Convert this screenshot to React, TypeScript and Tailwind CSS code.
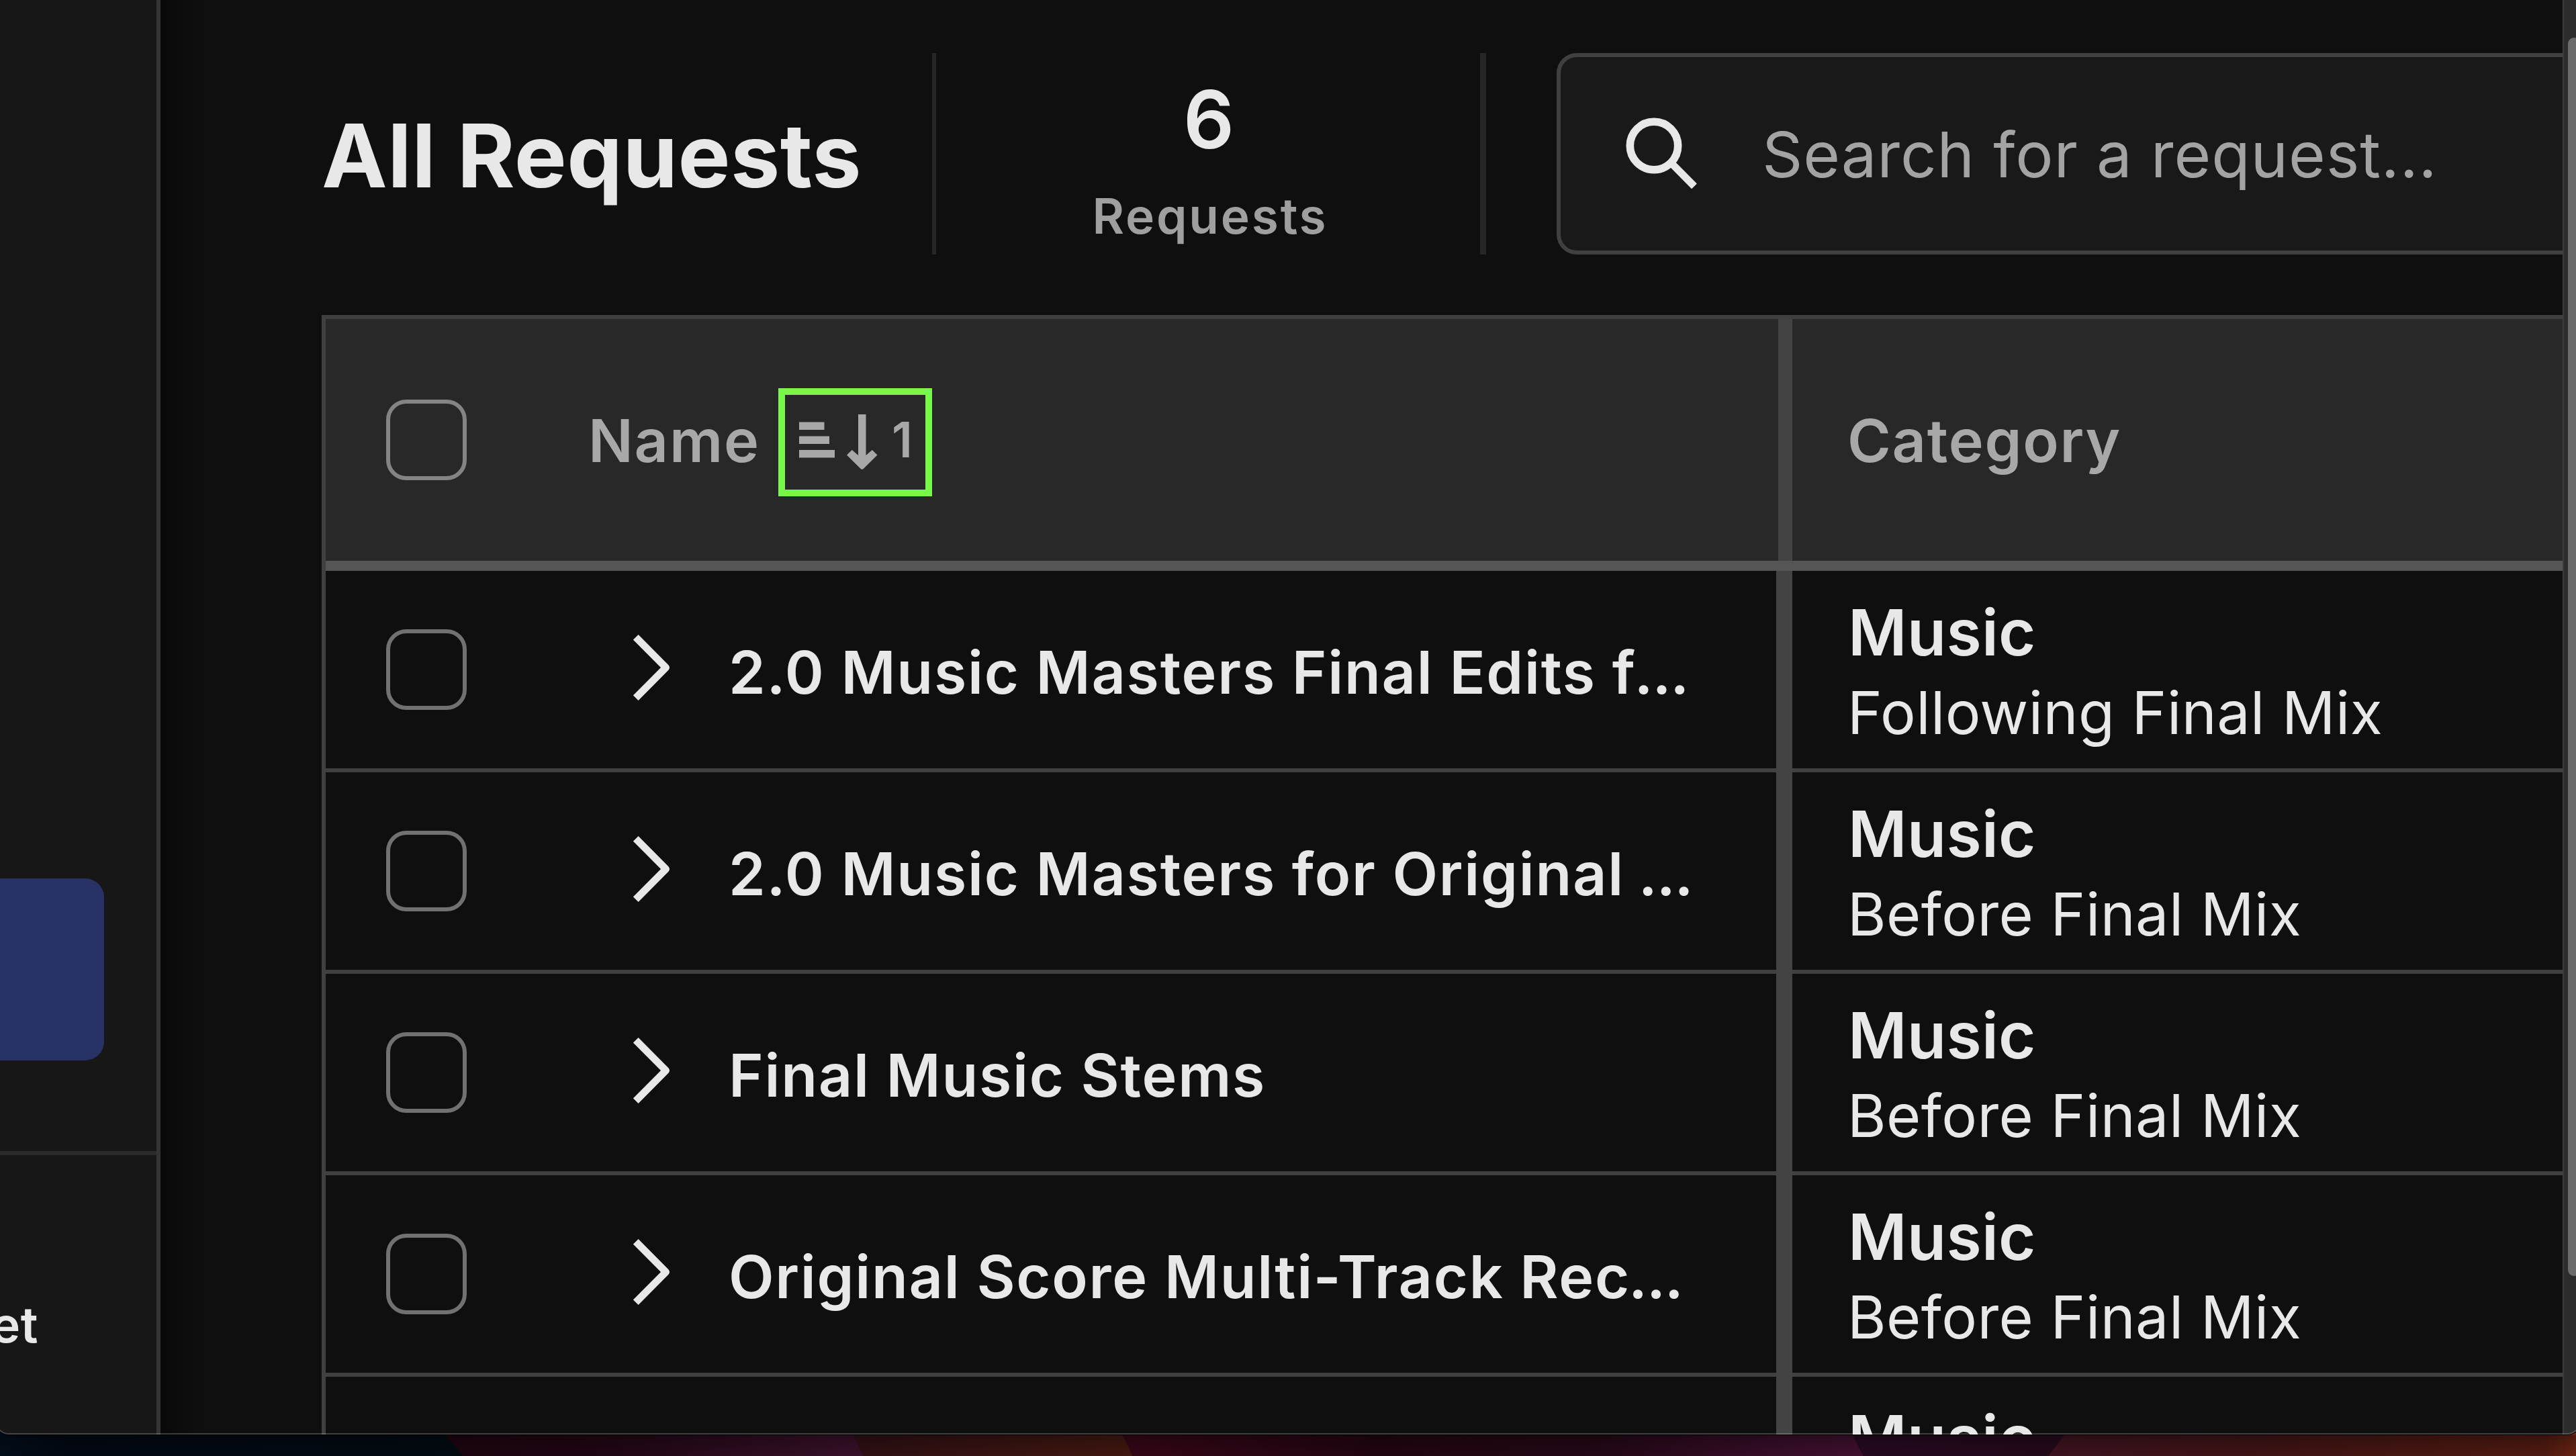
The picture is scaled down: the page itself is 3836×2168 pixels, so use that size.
const requests = [
  { name: "2.0 Music Masters Final Edits f", truncated: true, category: "Music", stage: "Following Final Mix" },
  { name: "2.0 Music Masters for Original ", truncated: true, category: "Music", stage: "Before Final Mix" },
  { name: "Final Music Stems", truncated: false, category: "Music", stage: "Before Final Mix" },
  { name: "Original Score Multi-Track Rec", truncated: true, category: "Music", stage: "Before Final Mix" },
  { name: "", truncated: false, category: "Music", stage: "" },
];

function SearchIcon() {
  return (
    <svg className="h-[108px] w-[108px] shrink-0" viewBox="0 0 108 108" fill="none" stroke="#e8e8e8">
      <circle cx="43" cy="43" r="35.7" strokeWidth="11.6" />
      <path d="M67.5 67.5 103 103.3" strokeWidth="11" />
    </svg>
  );
}

function SortIcon() {
  return (
    <svg className="h-[82px] w-[117px] shrink-0" viewBox="0 0 117 82" fill="#a8a8a8">
      <path d="M0 11.5h37.5V23H0zM0 32.5h45V44H0zM0 53h53v11.5H0z" />
      <path d="M88 0h11.5v61L108.8 53l7.7 7.5-21 20.7q-1.8 1-3.6 0L71 60.5l7.7-7.5L88 61z" />
    </svg>
  );
}

function Chevron() {
  return (
    <svg className="h-[98px] w-[54px] shrink-0" viewBox="0 0 54 98" fill="none" stroke="#e8e8e8">
      <path d="M3.8 3.8 48.6 49 3.8 94.2" strokeWidth="10.8" strokeLinejoin="round" />
    </svg>
  );
}

function Wallpaper() {
  return (
    <svg className="absolute inset-0 h-[2168px] w-[3836px]" viewBox="0 0 3836 2168">
      <defs>
        <linearGradient id="navy"><stop offset="0" stopColor="#020e1b" /><stop offset=".15" stopColor="#020811" /><stop offset="1" stopColor="#020b12" /></linearGradient>
        <linearGradient id="maroon"><stop offset="0" stopColor="#1b0410" /><stop offset=".4" stopColor="#200614" /><stop offset="1" stopColor="#371129" /></linearGradient>
        <linearGradient id="rust"><stop offset="0" stopColor="#2c0f13" /><stop offset="1" stopColor="#421710" /></linearGradient>
        <linearGradient id="wine"><stop offset="0" stopColor="#370617" /><stop offset=".35" stopColor="#210511" /><stop offset=".65" stopColor="#240817" /><stop offset="1" stopColor="#401030" /></linearGradient>
        <linearGradient id="plum"><stop offset="0" stopColor="#260a20" /><stop offset="1" stopColor="#23091a" /></linearGradient>
        <linearGradient id="ember"><stop offset="0" stopColor="#3c1220" /><stop offset=".4" stopColor="#3f1314" /><stop offset=".94" stopColor="#4f1a11" /><stop offset="1" stopColor="#6a2412" /></linearGradient>
        <linearGradient id="dusk" x2="0" y2="1"><stop offset="0" stopColor="#000" stopOpacity=".28" /><stop offset="1" stopColor="#000" stopOpacity="0" /></linearGradient>
      </defs>
      <path fill="url(#navy)" d="M0 2100H631L690 2168H0z" />
      <path fill="url(#maroon)" d="M631 2100H1254L1286 2168H690z" />
      <path fill="url(#rust)" d="M1254 2100H1654L1687 2168H1286z" />
      <path fill="url(#wine)" d="M1654 2100H2740L2775 2168H1687z" />
      <path fill="url(#plum)" d="M2740 2100H3102L3050 2168H2775z" />
      <path fill="url(#ember)" d="M3102 2100H3836V2168H3050z" />
      <path fill="url(#dusk)" d="M0 2137H3836V2168H0z" />
    </svg>
  );
}

export default function App() {
  return (
    <div className="relative h-[2168px] w-[3836px] overflow-hidden bg-black font-['Inter',sans-serif] text-[#e8e8e8]">
      <Wallpaper />
      <div className="relative -ml-[7px] flex h-[2136px] w-[3850px] overflow-hidden rounded-b-[20px] bg-[#0f0f0f] shadow-[0_0_0_1px_#000]">
        <aside className="flex h-full w-[246px] shrink-0 flex-col border-r-[6px] border-[#343434] bg-[#171717]">
          <div className="h-[1720px] shrink-0 border-b-[6px] border-[#2b2b2b] pt-[1308px]">
            <div className="h-[271px] w-[162px] rounded-r-[28px] bg-[#293265]" />
          </div>
          <div className="flex w-[64px] justify-end pt-[208px] text-[73px] leading-[90px] font-semibold tracking-[0.5px]">
            <span>et</span>
          </div>
        </aside>
        <div className="w-[60px] shrink-0 bg-linear-to-r from-[#090909] to-[#0f0f0f]" />

        <main className="flex w-[3517px] shrink-0 flex-col overflow-hidden pt-[79px] pl-[180px]">
          <header className="flex h-[300px] shrink-0">
            <h1 className="w-[909px] shrink-0 pt-[73px] text-[131px] leading-[160px] font-bold tracking-[0.5px] whitespace-nowrap">
              All Requests
            </h1>
            <div className="flex w-[825px] shrink-0 flex-col items-center border-r-[9px] border-l-[6px] border-[#262626] pt-[39px]">
              <span className="pl-[2px] text-[119px] leading-[120px] font-semibold">6</span>
              <span className="mt-[36px] pl-[6px] text-[73px] leading-[96px] font-semibold tracking-[2.8px] text-[#9f9f9f]">Requests</span>
            </div>
            <div className="ml-[105px] flex w-[1700px] shrink-0 rounded-[30px] border-[6px] border-[#404040] bg-[#191919] pt-[89px] pl-[96px]">
              <SearchIcon />
              <span className="-mt-[4px] ml-[96px] text-[94px] leading-[120px] tracking-[0.85px] whitespace-nowrap text-[#a3a3a3]">
                Search for a request...
              </span>
            </div>
          </header>

          <section className="mt-[90px] flex w-[3400px] shrink-0 flex-col border-t-[6px] border-l-[6px] border-[#404040]">
            <div className="flex h-[375px] border-b-[15px] border-[#555555] bg-[#282828] text-[88px] leading-[120px] font-semibold text-[#a8a8a8]">
              <div className="flex w-[2184px] shrink-0 items-center border-r-[21px] border-[#434343] pl-[90px]">
                <div className="size-[120px] shrink-0 rounded-[30px] border-[6px] border-[#848484]" />
                <span className="ml-[181px] w-[283px] pt-[2px] tracking-[1.8px]">Name</span>
                <div className="mt-[7px] flex h-[161px] w-[229px] items-center border-[10px] border-[#77f74a] pb-[2px] pl-[21px]">
                  <SortIcon />
                  <span className="ml-[21px] pb-[5px] text-[73px] font-semibold">1</span>
                </div>
              </div>
              <div className="flex flex-1 items-center pt-[2px] pl-[82px] tracking-[1.7px]">Category</div>
            </div>

            {requests.map((request, index) => (
              <div key={index} className="flex h-[300px] shrink-0">
                <div className="flex w-[2184px] shrink-0 border-r-[24px] border-[#434343]">
                  <div className="flex flex-1 items-center border-b-[6px] border-[#404040] pl-[90px]">
                    {request.name && (
                      <>
                        <div className="size-[120px] shrink-0 rounded-[30px] border-[6px] border-[#717171]" />
                        <div className="-mt-[6px] ml-[248px]">
                          <Chevron />
                        </div>
                        <span className="ml-[88px] pt-[8px] text-[88px] leading-[120px] font-semibold tracking-[1.7px] whitespace-pre">
                          {request.name}
                          {request.truncated && <span className="-ml-[3px] tracking-[-1.2px]">...</span>}
                        </span>
                      </>
                    )}
                  </div>
                </div>
                <div className="flex flex-1 flex-col border-b-[6px] border-[#404040] pt-[32px] pl-[83px]">
                  <span className="text-[95px] leading-[120px] font-semibold tracking-[0.3px]">{request.category}</span>
                  <span className="-ml-px text-[88px] leading-[118px] tracking-[0.45px]">{request.stage}</span>
                </div>
              </div>
            ))}
          </section>
        </main>

        <div className="flex flex-1 border-l-2 border-[#3d3d3d] bg-[#2c2c2c] pt-[56px] pl-[6px]">
          <div className="h-[1844px] w-[18px] rounded-[9px] bg-[#6b6b6b]" />
        </div>
        <div className="pointer-events-none absolute inset-0 rounded-b-[20px] border-2 border-t-0 border-white/20" />
      </div>
    </div>
  );
}
